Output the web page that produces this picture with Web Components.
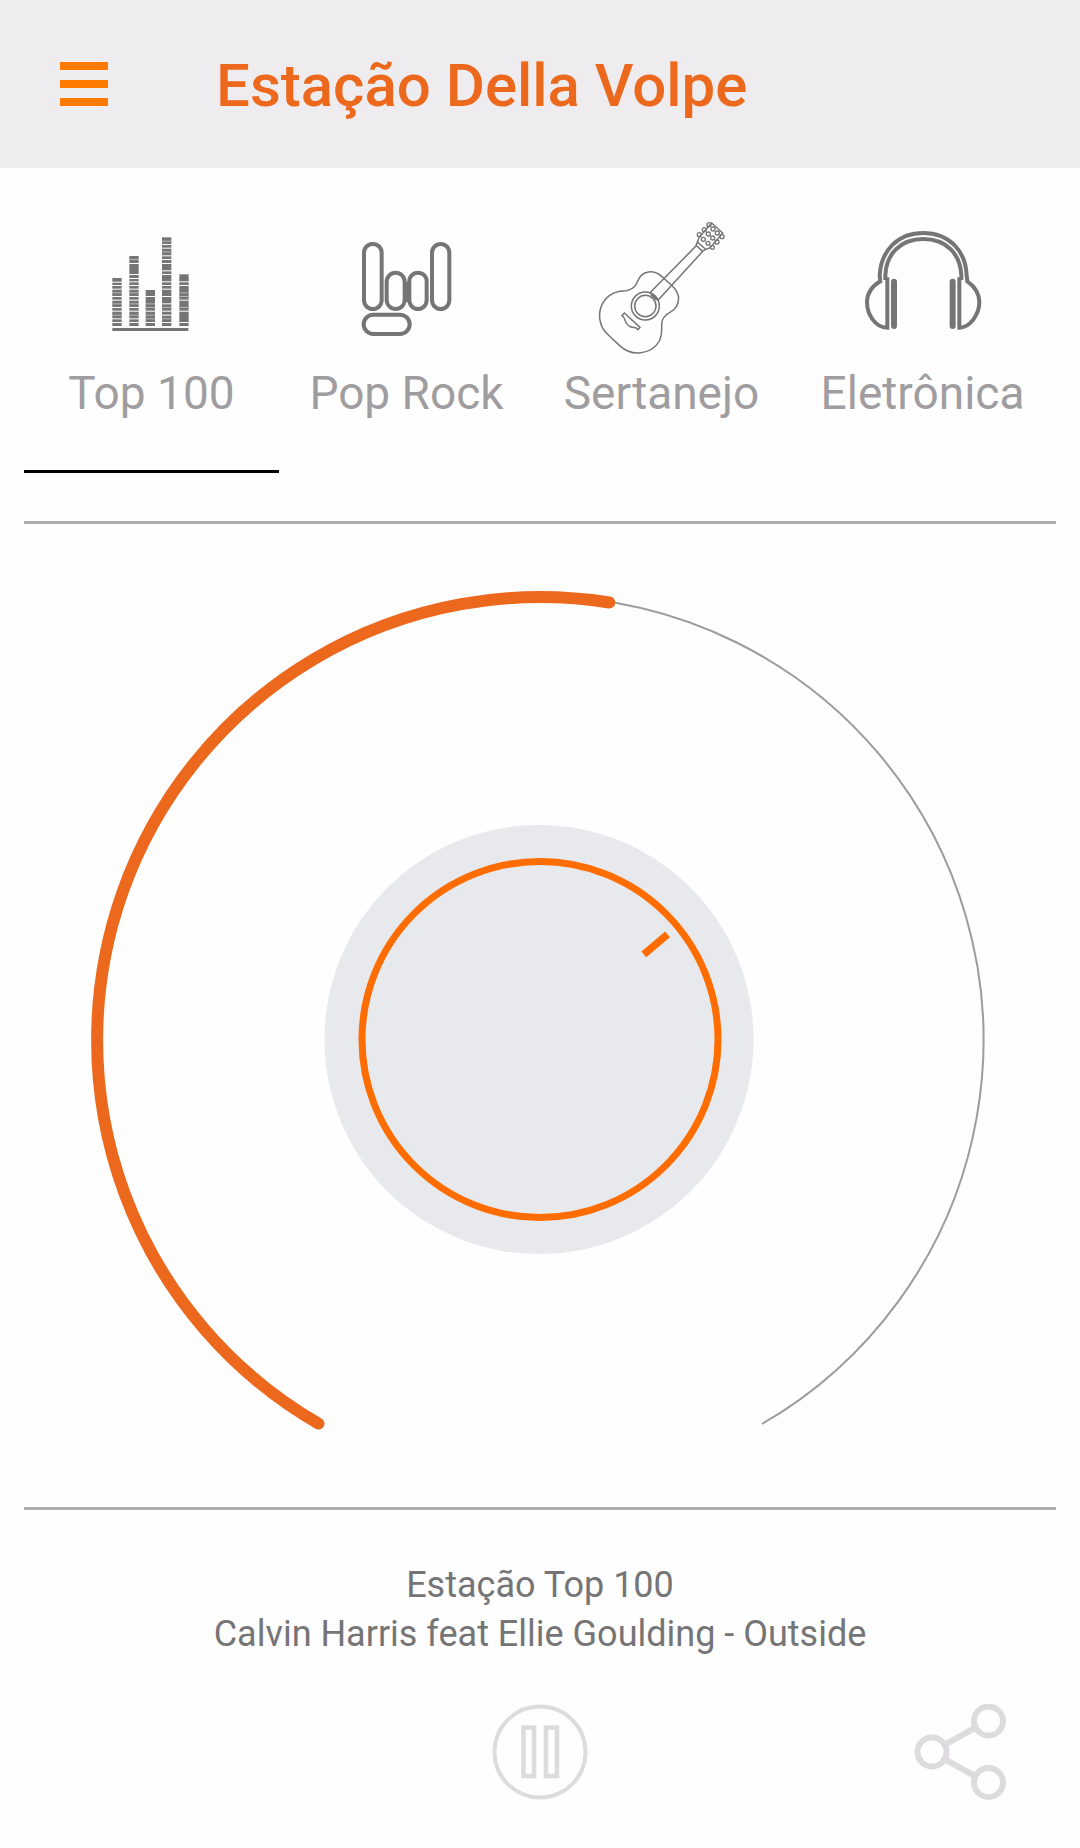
<!DOCTYPE html>
<html lang="pt-BR">
<head>
  <meta charset="utf-8">
  <meta name="viewport" content="width=device-width, initial-scale=1">
  <title>Estação Della Volpe</title>
  <style>
    body {
      margin: 0;
      background-color: #fefefe;
      font-family: Roboto, "Liberation Sans", sans-serif;
      --accent: #ec681c;
      --accent-bright: #ff7b00;
      --icon: #767476;
      --rule: #adacae;
      --faint: #dddbde;
    }
  </style>
</head>
<body>
  <radio-app></radio-app>

  <script>
    class RadioHeader extends HTMLElement {
      constructor() {
        super();
        this._root = this.attachShadow({ mode: 'open' });
      }

      connectedCallback() {
        this._root.innerHTML = `
          <style>
            :host {
              display: block;
              background-color: #eeecee;
            }

            header {
              display: flex;
              align-items: center;
              gap: 96px;
              height: 168px;
              padding: 0 48px;
            }

            button {
              display: flex;
              flex-direction: column;
              gap: 10px;
              padding: 12px;
              border: 0;
              background: none;
              cursor: pointer;
            }

            .bar {
              width: 48px;
              height: 8px;
              background-color: var(--accent-bright);
            }

            h1 {
              margin: 0;
              padding-top: 4px;
              font-size: 60px;
              line-height: 72px;
              font-weight: 500;
              color: var(--accent);
            }
          </style>
          <header>
            <button type="button" aria-label="Menu">
              <span class="bar"></span>
              <span class="bar"></span>
              <span class="bar"></span>
            </button>
            <h1><slot></slot></h1>
          </header>
        `;
      }
    }

    // One genre tab: the icon goes in the "icon" slot, the label in the default one
    class GenreTab extends HTMLElement {
      static get observedAttributes() {
        return ['selected'];
      }

      constructor() {
        super();
        this._root = this.attachShadow({ mode: 'open' });
        this._$button = null;
      }

      connectedCallback() {
        this._root.innerHTML = `
          <style>
            :host {
              display: block;
              min-width: 0;
            }

            button {
              display: flex;
              flex-direction: column;
              align-items: center;
              gap: 5px;
              width: 100%;
              padding: 42px 0 49px;
              border: 0;
              border-bottom: 3px solid transparent;
              background: none;
              font: inherit;
              font-size: 46px;
              line-height: 56px;
              color: #9f9da0;
              white-space: nowrap;
              cursor: pointer;
            }

            :host([selected]) button {
              border-bottom-color: black;
            }

            ::slotted(svg) {
              display: block;
              width: 160px;
              height: 150px;
            }
          </style>
          <button type="button">
            <slot name="icon"></slot>
            <span><slot></slot></span>
          </button>
        `;
        this._$button = this._root.querySelector('button');
        this._render();
      }

      attributeChangedCallback() {
        this._render();
      }

      _render() {
        if(this._$button !== null) {
          this._$button.setAttribute('aria-pressed', this.hasAttribute('selected'));
        }
      }
    }

    // Stacked bars of the equalizer, cut by gaps at the given heights
    const EQ_BARS = [
      { x: 69, top: 174, gaps: [186, 196, 207, 229, 240, 262, 273, 296, 307], soft: [218, 251, 285] },
      { x: 120, top: 108, gaps: [130, 163, 175, 185, 196, 207, 229, 240, 262, 273, 296, 307], soft: [118, 218, 251, 285] },
      { x: 169, top: 210, gaps: [229, 273, 307], soft: [251, 262, 285, 296] },
      { x: 218, top: 52, gaps: [73, 84, 107, 118, 130, 152, 163, 185, 196, 207, 229, 251, 273, 285, 307], soft: [63, 95, 262, 296] },
      { x: 270, top: 163, gaps: [185, 196, 240, 273, 307], soft: [218, 229, 262] }
    ];

    function equalizer() {
      return EQ_BARS.map(({ x, top, gaps, soft }) => `
        <rect x="${x}" y="${top}" width="28" height="${318 - top}" fill="#767476"/>
        ${gaps.map((y) => `<rect x="${x - 1}" y="${y - 1}" width="30" height="3" fill="#fefefe"/>`).join('')}
        ${soft.map((y) => `<rect x="${x}" y="${y - 1}" width="28" height="3" fill="#b5b4b6"/>`).join('')}
      `).join('');
    }

    class GenreTabs extends HTMLElement {
      constructor() {
        super();
        this._root = this.attachShadow({ mode: 'open' });
      }

      connectedCallback() {
        this._root.innerHTML = `
          <style>
            :host {
              display: block;
              padding-bottom: 48px;
              border-bottom: 3px solid var(--rule);
            }

            nav {
              display: grid;
              grid-template-columns: repeat(3, 255fr) 267fr;
            }
          </style>
          <nav aria-label="Estações">
            <genre-tab selected>
              <svg slot="icon" viewBox="-52 -30 480 450" aria-hidden="true">
                ${equalizer()}
                <rect x="69" y="324" width="228" height="9" fill="#767476"/>
              </svg>
              Top 100
            </genre-tab>
            <genre-tab>
              <svg slot="icon" viewBox="-38 -30 480 450" fill="none" stroke="#767476" stroke-width="12" aria-hidden="true">
                <rect x="73" y="72" width="53" height="195" rx="26"/>
                <rect x="277" y="72" width="52" height="195" rx="26"/>
                <rect x="141" y="158" width="54" height="109" rx="27"/>
                <rect x="209" y="158" width="52" height="109" rx="26"/>
                <rect x="72" y="284" width="138" height="58" rx="29"/>
                <path d="M202 186V246" stroke-width="18"/>
              </svg>
              Pop Rock
            </genre-tab>
            <genre-tab>
              <svg slot="icon" viewBox="8 0 480 450" fill="none" stroke="#767476" stroke-width="4.5" aria-hidden="true">
                <path d="M298 262C296 247 288 236 276 225L247 199C234 188 222 184 207 186C191 188 181 198 175 214C169 231 158 240 140 242C116 242 95 248 79 267C62 287 59 303 61 325C64 348 71 360 90 378L121 407C140 424 160 431 181 429C207 426 229 413 240 393C248 377 248 361 247 342C248 324 256 315 272 307C289 299 298 284 298 262Z"/>
                <circle cx="198" cy="288" r="42"/>
                <circle cx="198" cy="288" r="32"/>
                <path d="M212 248L352 106M236 271L370 124M212 248L236 271"/>
                <path d="M217 253L233 268" stroke-width="9"/>
                <path d="M350 106L370 124M355 97L378 117M350 106L356 92C358 88 357 84 361 80L397 39L430 69L396 109C390 118 380 114 370 124"/>
                <path d="M128 317L135 309L182 352L176 359L169 353C157 353 144 350 138 334C136 328 139 326 128 317Z"/>
                <g stroke-width="4">
                  <circle cx="389" cy="44" r="6"/>
                  <circle cx="375" cy="59" r="6"/>
                  <circle cx="360" cy="74" r="6"/>
                  <circle cx="401" cy="57" r="6"/>
                  <circle cx="387" cy="72" r="6"/>
                  <circle cx="372" cy="88" r="6"/>
                  <circle cx="414" cy="69" r="6"/>
                  <circle cx="400" cy="84" r="6"/>
                  <circle cx="386" cy="100" r="6"/>
                  <circle cx="428" cy="80" r="6"/>
                  <circle cx="413" cy="96" r="6"/>
                  <circle cx="399" cy="112" r="6"/>
                </g>
              </svg>
              Sertanejo
            </genre-tab>
            <genre-tab>
              <svg slot="icon" viewBox="-22 0 480 450" fill="none" stroke="#767476" stroke-width="12" aria-hidden="true">
                <path d="M111 202V353C74 353 50 312 50 277C50 250 66 228 90 214L88 196C92 122 142 69 219 69C296 69 346 122 349 196L351 214C371 228 387 250 387 277C387 312 360 353 327 353V202"/>
                <path d="M105 210V196C108 132 150 87 219 87C288 87 330 132 333 196V210"/>
                <path d="M131 215V348M307 215V348" stroke-width="18" stroke-linecap="round"/>
              </svg>
              Eletrônica
            </genre-tab>
          </nav>
        `;

        const tabs = [...this._root.querySelectorAll('genre-tab')];
        tabs.forEach((tab) => {
          tab.addEventListener('click', () => {
            tabs.forEach((other) => other.toggleAttribute('selected', other === tab));
          });
        });
      }
    }

    // Volume knob. The arc leaves a 60 degree opening at the bottom.
    class VolumeDial extends HTMLElement {
      constructor() {
        super();
        this._root = this.attachShadow({ mode: 'open' });
        this._$level = null;
        this._$tick = null;
      }

      connectedCallback() {
        this._root.innerHTML = `
          <style>
            :host {
              display: block;
              position: relative;
              border-bottom: 3px solid var(--rule);
            }

            svg {
              display: block;
              width: 100%;
            }

            input {
              position: absolute;
              inset: 0;
              width: 100%;
              height: 100%;
              margin: 0;
              opacity: 0;
              cursor: pointer;
            }
          </style>
          <svg viewBox="0 0 1032 983" fill="none" aria-hidden="true">
            <path d="M294 900A443.5 443.5 0 1 1 738 900" stroke="#9c9b9d" stroke-width="2"/>
            <path class="level" stroke="var(--accent)" stroke-width="12" stroke-linecap="round"/>
            <circle cx="515" cy="515.5" r="214.5" fill="#e8e9ed"/>
            <circle cx="516" cy="515.5" r="178" stroke="#ff6c00" stroke-width="7"/>
            <path class="tick" d="M516 381V350" stroke="#ff6c00" stroke-width="7.5"/>
          </svg>
          <input type="range" min="0" max="300" value="159" aria-label="Volume">
        `;

        this._$level = this._root.querySelector('.level');
        this._$tick = this._root.querySelector('.tick');
        const input = this._root.querySelector('input');
        input.addEventListener('input', () => this._render(Number(input.value)));
        this._render(Number(input.value));
      }

      _render(value) {
        const angle = (value - 150) * Math.PI / 180;
        const x = 516 + 443 * Math.sin(angle);
        const y = 516 - 443 * Math.cos(angle);
        const large = value > 180 ? 1 : 0;
        this._$level.setAttribute('d', `M294.5 899.6A443 443 0 ${large} 1 ${x} ${y}`);
        this._$tick.setAttribute('transform', `rotate(${value - 109} 515 517)`);
      }
    }

    class RadioPlayer extends HTMLElement {
      constructor() {
        super();
        this._root = this.attachShadow({ mode: 'open' });
      }

      connectedCallback() {
        this._root.innerHTML = `
          <style>
            :host {
              display: block;
              padding: 51px 0 48px;
            }

            .track {
              font-size: 36px;
              line-height: 49px;
              text-align: center;
              color: #757476;
            }

            p {
              margin: 0;
            }

            .controls {
              display: grid;
              grid-template-columns: 1fr auto 1fr;
              margin-top: 45px;
              padding: 0 48px;
            }

            button {
              width: 96px;
              height: 96px;
              padding: 0;
              border: 0;
              background: none;
              cursor: pointer;
            }

            .play {
              grid-column: 2;
            }

            .share {
              grid-column: 3;
              justify-self: end;
            }

            svg {
              display: block;
            }
          </style>
          <div class="track">
            <p><slot name="station"></slot></p>
            <p><slot name="song"></slot></p>
          </div>
          <div class="controls">
            <button class="play" type="button" aria-label="Pausar">
              <svg viewBox="0 0 96 96" fill="none" stroke="var(--faint)" stroke-width="4">
                <circle cx="48" cy="48" r="45.5"/>
                <rect x="31.5" y="23.5" width="10.5" height="48.5" stroke-width="4.5"/>
                <rect x="54" y="23.5" width="11" height="48.5" stroke-width="4.5"/>
              </svg>
            </button>
            <button class="share" type="button" aria-label="Compartilhar">
              <svg viewBox="0 0 96 96" fill="none" stroke="var(--faint)" stroke-width="6">
                <circle cx="20" cy="48" r="14.5"/>
                <circle cx="76.5" cy="17" r="14.5"/>
                <circle cx="76.5" cy="78.5" r="14.5"/>
                <path d="M34 40L63 24M34 56L63 72"/>
              </svg>
            </button>
          </div>
        `;
      }
    }

    class RadioApp extends HTMLElement {
      constructor() {
        super();
        this._root = this.attachShadow({ mode: 'open' });
      }

      connectedCallback() {
        this._root.innerHTML = `
          <style>
            :host {
              display: block;
            }

            main {
              padding: 0 24px;
            }
          </style>
          <radio-header>Estação Della Volpe</radio-header>
          <main>
            <genre-tabs></genre-tabs>
            <volume-dial></volume-dial>
            <radio-player>
              <span slot="station">Estação Top 100</span>
              <span slot="song">Calvin Harris feat Ellie Goulding - Outside</span>
            </radio-player>
          </main>
        `;
      }
    }

    window.customElements.define('radio-header', RadioHeader);
    window.customElements.define('genre-tab', GenreTab);
    window.customElements.define('genre-tabs', GenreTabs);
    window.customElements.define('volume-dial', VolumeDial);
    window.customElements.define('radio-player', RadioPlayer);
    window.customElements.define('radio-app', RadioApp);
  </script>
</body>
</html>
